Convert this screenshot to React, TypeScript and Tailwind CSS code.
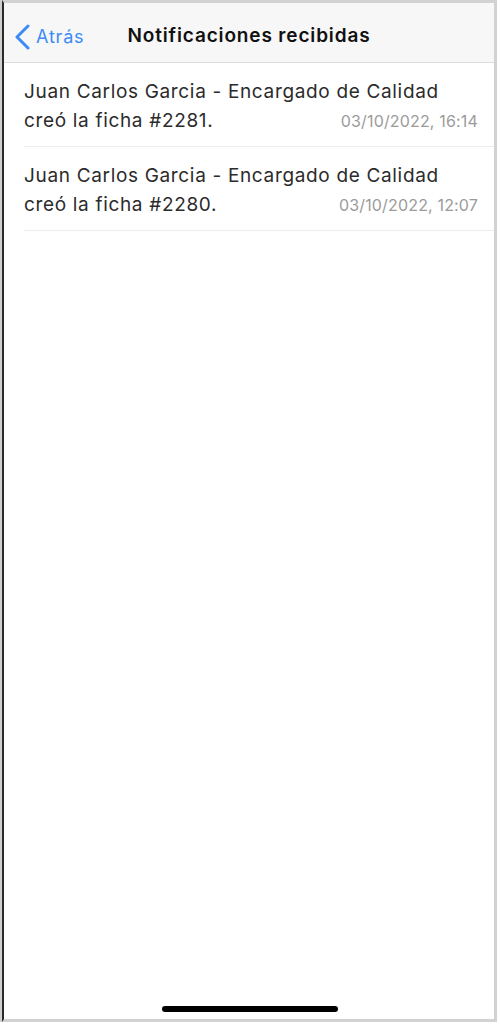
const notifications = [
  { id: 2281, author: 'Juan Carlos Garcia - Encargado de Calidad', date: '03/10/2022, 16:14' },
  { id: 2280, author: 'Juan Carlos Garcia - Encargado de Calidad', date: '03/10/2022, 12:07' },
];

export default function App() {
  return (
    <div className="h-[1025px] w-[500px] bg-white font-['Inter','Liberation_Sans',sans-serif]">
      <div className="h-[1022px] w-[497px] border-l-2 border-[#cfcfcf]">
        <div className="flex h-full flex-col border-t-[3px] border-r-[3px] border-b-[3px] border-l-2 border-t-[#d2d2d2] border-r-[#d2d2d2] border-b-[#d2d2d2] border-l-[#2a2a2a]">
          <header className="relative flex h-[60px] shrink-0 items-center justify-center border-b border-[#dcdcdc] bg-[#f7f7f7] pt-[7px]">
            <button className="absolute left-[9px] top-[20px] flex items-center text-[#3b8cf5]">
              <svg width="20" height="26" viewBox="0 0 20 26" fill="none">
                <path d="M15 2 L4 13 L15 24" stroke="currentColor" strokeWidth="3" strokeLinecap="round" strokeLinejoin="round" />
              </svg>
              <span className="ml-[3px] text-[18px] tracking-[0.045em]">Atrás</span>
            </button>
            <h1 className="text-[19px] font-semibold tracking-[0.045em] text-[#111]">Notificaciones recibidas</h1>
          </header>

          <ul className="flex-1">
            {notifications.map((n) => (
              <li key={n.id} className="ml-[20px] border-b border-[#ececec] pt-[14px] pb-[11px] pr-[16px]">
                <p className="text-[19px] leading-[29px] tracking-[0.035em] text-[#2b2b2b]">{n.author}</p>
                <div className="flex items-baseline justify-between">
                  <p className="text-[19px] leading-[29px] tracking-[0.035em] text-[#2b2b2b]">creó la ficha #{n.id}.</p>
                  <span className="text-[16px] tracking-[0.01em] text-[#9b9b9b]">{n.date}</span>
                </div>
              </li>
            ))}
          </ul>

          <div className="flex h-[13px] shrink-0 items-start justify-center">
            <div className="ml-[2px] h-[6px] w-[176px] rounded-full bg-black" />
          </div>
        </div>
      </div>
    </div>
  );
}
